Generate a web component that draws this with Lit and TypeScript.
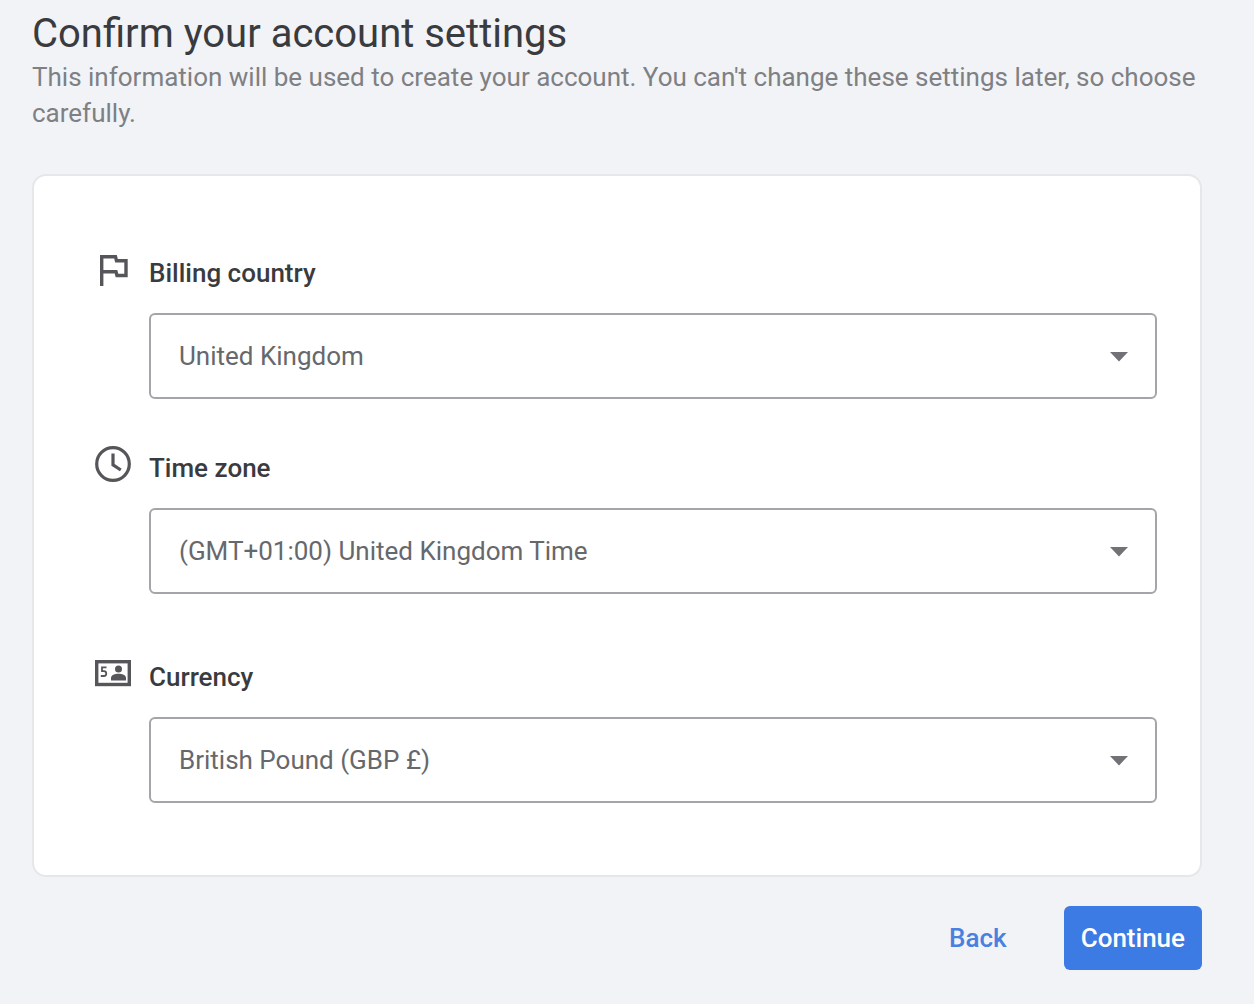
import { LitElement, html, css, svg } from "lit";
import { customElement, property } from "lit/decorators.js";

const icons: Record<string, unknown> = {
  flag: svg`<path fill="none" stroke="currentColor" stroke-width="3.400" d="M6.700 35V5.700H20.500L21.500 9.700H31V24.500H22L21 20.700H6.700"/>`,
  clock: svg`<g fill="none" stroke="currentColor" stroke-width="3.200"><circle cx="18" cy="18" r="16.300"/><path d="M18 7.500V18.800L25.800 24"/></g>`,
  money: svg`<rect x="1.700" y="6.700" width="32.600" height="22.800" fill="none" stroke="currentColor" stroke-width="3.400"/>
    <path fill="none" stroke="currentColor" stroke-width="1.800" d="M11.500 12.300H7V16.100H9C12 16.100 12 21 9 21H5.800"/>
    <circle cx="23.500" cy="14" r="3.500" fill="currentColor"/>
    <path fill="currentColor" d="M16 25.500V23C16 20 20 18.800 23.500 18.800S31 20 31 23V25.500Z"/>`,
};

@customElement("setting-field")
export class SettingField extends LitElement {
  @property() label = "";
  @property() icon = "";
  @property() value = "";

  static styles = css`
    :host {
      display: grid;
      grid-template-columns: 36px 1fr;
      column-gap: 18px;
      row-gap: 18px;
      align-items: start;
    }
    .icon {
      width: 36px;
      height: 36px;
      color: #54565a;
    }
    .label {
      font-size: 26px;
      line-height: 44px;
      font-weight: 500;
      color: #3a3b3e;
    }
    .box {
      grid-column: 2;
      display: grid;
      align-items: center;
    }
    .select {
      grid-area: 1 / 1;
      appearance: none;
      box-sizing: border-box;
      width: 100%;
      height: 86px;
      margin: 0;
      padding: 0 64px 0 28px;
      border: 2px solid #a3a5a8;
      border-radius: 6px;
      background: #fff;
      color: #66686c;
      font: inherit;
      font-size: 26px;
    }
    .arrow {
      grid-area: 1 / 1;
      justify-self: end;
      width: 18px;
      height: 12px;
      margin-right: 29px;
      fill: #707276;
      pointer-events: none;
    }
  `;

  render() {
    return html`
      <svg class="icon" viewBox="0 0 36 36" aria-hidden="true">${icons[this.icon]}</svg>
      <label class="label" for="field">${this.label}</label>
      <div class="box">
        <select class="select" id="field">
          <option selected>${this.value}</option>
        </select>
        <svg class="arrow" viewBox="0 0 18 12" aria-hidden="true"><path d="M0 2H18L9 11.500Z" /></svg>
      </div>
    `;
  }
}

@customElement("app-root")
export class AppRoot extends LitElement {
  static styles = css`
    :host {
      display: block;
      box-sizing: border-box;
      min-height: 100vh;
      padding: 9px 52px 32px 32px;
      background: #f2f3f6;
      font-family: Roboto, "Liberation Sans", sans-serif;
    }
    .title {
      margin: 0;
      font-size: 40px;
      line-height: 50px;
      font-weight: 400;
      color: #3a3b3e;
    }
    .intro {
      margin: 0;
      font-size: 26px;
      line-height: 36px;
      color: #7e8083;
    }
    .card {
      margin-top: 43px;
      padding: 75px 43px 72px 61px;
      border: 2px solid #e6e7e9;
      border-radius: 14px;
      background: #fff;
      display: flex;
      flex-direction: column;
      gap: 47px;
    }
    .last {
      margin-top: 14px;
    }
    .actions {
      display: flex;
      justify-content: flex-end;
      gap: 40px;
      margin-top: 29px;
    }
    .button {
      height: 64px;
      padding: 0 17px;
      border: 0;
      border-radius: 6px;
      background: none;
      color: #4a80e0;
      font: inherit;
      font-size: 26px;
      font-weight: 500;
    }
    .primary {
      background: #3c7ae4;
      color: #fff;
    }
  `;

  render() {
    return html`
      <main>
        <h1 class="title">Confirm your account settings</h1>
        <p class="intro">
          This information will be used to create your account. You can't change these settings later, so choose
          carefully.
        </p>
        <form class="card">
          <setting-field icon="flag" label="Billing country" value="United Kingdom"></setting-field>
          <setting-field icon="clock" label="Time zone" value="(GMT+01:00) United Kingdom Time"></setting-field>
          <setting-field class="last" icon="money" label="Currency" value="British Pound (GBP £)"></setting-field>
        </form>
        <div class="actions">
          <button class="button" type="button">Back</button>
          <button class="button primary" type="button">Continue</button>
        </div>
      </main>
    `;
  }
}
